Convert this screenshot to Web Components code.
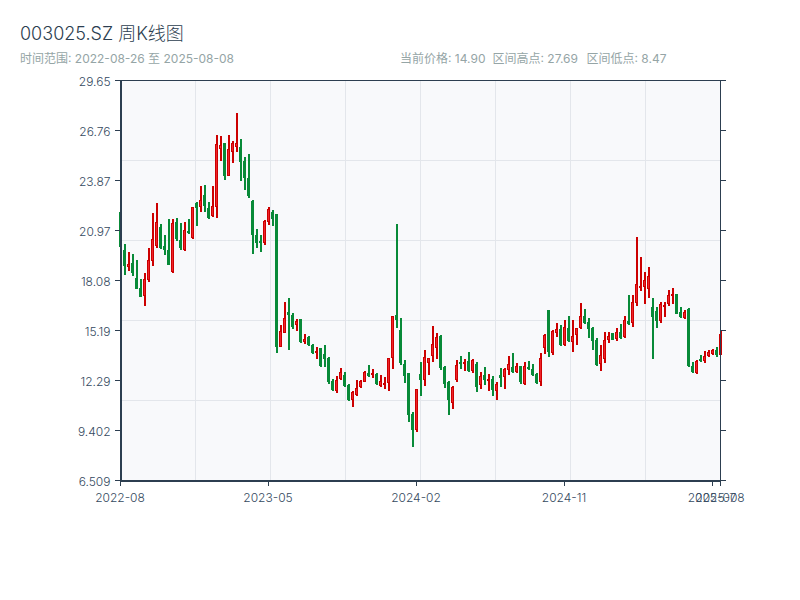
<!DOCTYPE html>
<html lang="zh">
<head>
<meta charset="utf-8">
<title>003025.SZ 周K线图</title>
<style>
  html, body { margin: 0; background: #fff; }
  body { font-family: Inter, "Noto Sans CJK SC", sans-serif; }
</style>
</head>
<body>
<kline-page>
  <kline-header>
    <span slot="title">003025.SZ 周K线图</span>
    <span slot="range">时间范围: 2022-08-26 至 2025-08-08</span>
    <kline-stat slot="stats">当前价格: 14.90</kline-stat>
    <kline-stat slot="stats">区间高点: 27.69</kline-stat>
    <kline-stat slot="stats">区间低点: 8.47</kline-stat>
  </kline-header>
  <kline-plot></kline-plot>
</kline-page>

<script>
  class KlinePage extends HTMLElement {
    constructor() {
      super();
      this.attachShadow({ mode: "open" });
      this.shadowRoot.innerHTML = `
        <style>
          :host { display: flex; flex-direction: column; width: 800px; height: 600px; }
        </style>
        <slot></slot>`;
    }
  }

  class KlineHeader extends HTMLElement {
    constructor() {
      super();
      this.attachShadow({ mode: "open" });
      this.shadowRoot.innerHTML = `
        <style>
          :host { display: block; height: 70px; padding: 23px 0 0 20px; box-sizing: border-box; }
          .title { font-size: 18px; font-weight: 300; line-height: 22px; color: #2c3e50; }
          .sub {
            display: grid;
            grid-template-columns: 380px auto;
            margin-top: 6px;
            font-size: 12px;
            line-height: 16px;
            color: #95a5a6;
          }
          .stats { display: grid; grid-template-columns: 92.5px 94px auto; }
        </style>
        <div class="title"><slot name="title"></slot></div>
        <div class="sub">
          <div><slot name="range"></slot></div>
          <div class="stats"><slot name="stats"></slot></div>
        </div>`;
    }
  }

  class KlineStat extends HTMLElement {
    constructor() {
      super();
      this.attachShadow({ mode: "open" });
      this.shadowRoot.innerHTML = `<style>:host { display: block; white-space: nowrap; }</style><slot></slot>`;
    }
  }

  // wick top, wick bottom, body top, body bottom, colour; one row per week, in page pixels
  const CANDLES = [
    [210,247,212,247,"g"],[244,275,250,266,"g"],[252,271,264,267,"r"],[254,276,263,273,"g"],[260,289,278,289,"g"],
    [279,297,288,297,"g"],[273,306,279,296,"r"],[248,282,260,280,"r"],[213,266,239,261,"r"],[203,248,222,246,"r"],
    [224,249,227,248,"g"],[235,255,246,250,"g"],[219,265,250,265,"g"],[219,273,223,272,"r"],[218,241,222,239,"g"],
    [223,250,240,248,"g"],[222,251,230,250,"r"],[219,234,231,233,"g"],[207,239,207,238,"r"],[202,226,203,208,"g"],
    [186,212,200,207,"r"],[185,212,195,206,"g"],[202,219,208,218,"g"],[186,217,206,216,"r"],[135,218,144,207,"r"],
    [136,161,145,149,"r"],[143,180,143,176,"g"],[135,176,149,176,"r"],[141,163,143,152,"r"],[113,152,143,147,"r"],
    [139,181,147,162,"g"],[157,190,161,178,"g"],[154,198,178,196,"g"],[200,254,201,235,"g"],[229,248,235,243,"g"],
    [235,252,241,243,"g"],[220,245,221,243,"r"],[207,225,209,222,"r"],[210,226,212,219,"g"],[214,353,214,347,"g"],
    [325,347,331,347,"r"],[302,333,318,333,"r"],[298,350,312,315,"g"],[313,329,315,327,"g"],[319,331,321,325,"r"],
    [319,343,319,342,"g"],[334,344,339,342,"r"],[336,346,337,345,"g"],[344,354,345,353,"g"],[347,359,351,353,"r"],
    [348,367,348,366,"g"],[345,367,354,359,"g"],[357,384,358,382,"g"],[379,391,381,390,"g"],[376,393,380,391,"r"],
    [368,380,372,379,"r"],[372,387,375,386,"g"],[384,401,385,400,"g"],[391,407,392,400,"r"],[380,396,388,395,"r"],
    [380,388,381,387,"r"],[371,382,372,382,"r"],[365,377,373,376,"g"],[369,378,373,375,"r"],[373,385,374,384,"g"],
    [375,387,381,386,"r"],[377,389,383,385,"r"],[358,391,358,383,"r"],[316,369,316,358,"r"],[224,328,315,320,"g"],
    [318,365,330,363,"g"],[360,383,364,376,"g"],[373,422,373,415,"g"],[412,447,414,430,"g"],[389,432,389,430,"r"],
    [362,396,374,380,"g"],[350,386,357,380,"r"],[358,375,358,363,"r"],[326,362,344,356,"r"],[333,359,337,348,"r"],
    [335,370,336,368,"g"],[366,388,367,384,"g"],[381,415,382,400,"g"],[386,409,387,403,"r"],[360,382,365,380,"r"],
    [356,369,362,364,"g"],[359,371,362,364,"r"],[352,372,361,371,"g"],[359,373,360,371,"r"],[362,392,364,387,"g"],
    [372,389,376,385,"r"],[367,385,375,380,"g"],[374,391,379,381,"r"],[376,396,379,390,"g"],[382,400,384,391,"r"],
    [368,387,375,378,"g"],[368,389,369,377,"r"],[356,375,364,370,"r"],[353,373,367,372,"g"],[363,373,366,372,"r"],
    [366,384,366,382,"g"],[362,385,366,384,"r"],[361,370,367,369,"g"],[364,376,369,375,"g"],[373,384,374,383,"g"],
    [353,386,358,382,"r"],[334,354,335,348,"r"],[310,357,310,352,"g"],[330,355,331,353,"r"],[323,337,329,333,"r"],
    [325,346,329,345,"g"],[320,346,327,345,"r"],[316,342,328,341,"g"],[320,352,336,342,"r"],[328,345,328,335,"r"],
    [303,329,316,328,"r"],[309,324,316,323,"g"],[318,338,322,329,"g"],[327,350,328,341,"g"],[338,366,340,365,"g"],
    [345,371,355,364,"r"],[332,363,340,359,"r"],[332,343,336,340,"r"],[333,340,333,340,"g"],[328,341,332,339,"r"],
    [324,339,332,338,"g"],[316,338,320,337,"r"],[295,325,321,324,"g"],[295,327,302,323,"r"],[237,306,284,303,"r"],
    [257,291,286,288,"r"],[272,304,280,287,"r"],[267,298,276,289,"r"],[298,359,307,317,"g"],[307,328,311,321,"g"],
    [302,323,304,321,"r"],[302,317,305,307,"r"],[290,306,295,304,"r"],[288,304,294,296,"r"],[294,314,294,314,"g"],
    [307,318,312,317,"g"],[310,319,312,318,"r"],[308,367,309,366,"g"],[362,373,366,372,"g"],[360,374,361,373,"r"],
    [355,362,359,361,"g"],[351,363,356,361,"r"],[350,357,352,356,"r"],[349,355,350,354,"r"],[347,357,350,355,"g"],
    [330,355,334,355,"r"]
  ];

  const Y_LABELS = ["29.65","26.76","23.87","20.97","18.08","15.19","12.29","9.402","6.509"];
  const X_LABELS = [[120,"2022-08"],[268,"2023-05"],[416,"2024-02"],[564,"2024-11"],[712,"2025-07"],[720,"2025-08"]];
  const V_GRID = [195,270,345,420,495,570,645];
  const H_GRID = [160,240,320,400];

  class KlinePlot extends HTMLElement {
    constructor() {
      super();
      this.attachShadow({ mode: "open" });
    }

    static get styles() {
      return `
        :host { display: block; width: 800px; height: 450px; }
        svg { display: block; }
        text { font-family: Inter, "Noto Sans CJK SC", sans-serif; font-size: 12px; font-weight: 300; fill: #34495e; }
        .up-dark { fill: #cc0000; }
        .up-light { fill: #ef232a; }
        .down { fill: #088a38; }
        .axis { fill: #2c3e50; }
        .grid { fill: #e3e6eb; }
      `;
    }

    connectedCallback() {
      this.render();
    }

    rect(x, y, w, h, cls) {
      return `<rect x="${x}" y="${y}" width="${w}" height="${h}" class="${cls}"/>`;
    }

    candles() {
      return CANDLES.map(([wt, wb, bt, bb, dir], i) => {
        const c = 121 + 4 * i;
        const cls = dir === "r" ? "up-dark" : "down";
        let s = this.rect(c - 1, wt, 2, wb - wt, cls) + this.rect(c - 2, bt, 3, bb - bt, cls);
        if (dir === "r" && bb - bt > 2) s += this.rect(c - 1, bt + 1, 1, bb - bt - 2, "up-light");
        return s;
      }).join("");
    }

    axes() {
      let s = "";
      Y_LABELS.forEach((label, i) => {
        const y = 80 + i * 50;
        s += this.rect(115, y, 5, 1, "axis") + this.rect(721, y, 5, 1, "axis");
        s += `<text x="110.5" y="${y + 6}" text-anchor="end">${label}</text>`;
      });
      X_LABELS.forEach(([x, label]) => {
        s += this.rect(x, 482, 1, 4, "axis");
        s += `<text x="${x}" y="502" text-anchor="middle">${label}</text>`;
      });
      s += this.rect(120, 80, 601, 1, "axis") + this.rect(720, 80, 1, 401, "axis");
      s += this.rect(120, 80, 2, 402, "axis") + this.rect(120, 480, 601, 2, "axis");
      return s;
    }

    render() {
      const grid = V_GRID.map(x => this.rect(x, 81, 1, 399, "grid")).join("") +
        H_GRID.map(y => this.rect(122, y, 598, 1, "grid")).join("");
      this.shadowRoot.innerHTML = `
        <style>${KlinePlot.styles}</style>
        <svg width="800" height="450" viewBox="0 70 800 450" shape-rendering="crispEdges">
          <rect x="120" y="80" width="600" height="400" fill="#f8f9fb"/>
          ${grid}
          ${this.candles()}
          ${this.axes()}
        </svg>`;
    }
  }

  customElements.define("kline-page", KlinePage);
  customElements.define("kline-header", KlineHeader);
  customElements.define("kline-stat", KlineStat);
  customElements.define("kline-plot", KlinePlot);
</script>
</body>
</html>
